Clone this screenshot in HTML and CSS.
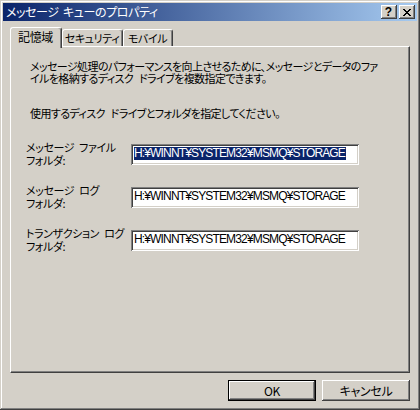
FILE: index.html
```html
<!DOCTYPE html>
<html lang="ja">
<head>
<meta charset="utf-8">
<link rel="stylesheet" href="styles.css">
</head>
<body>
<div class="window">
  <div class="titlebar">
    <span class="title">メッセージ キューのプロパティ</span>
    <div class="caption-buttons">
      <div class="cbtn help">?</div>
      <div class="cbtn close">
        <svg width="8" height="7" viewBox="0 0 8 7"><path d="M0 0h2v1h1v1h2V1h1V0h2v1H7v1H6v1H5v1h1v1h1v1h1v1H6V6H5V5H3v1H2v1H0V6h1V5h1V4h1V3H2V2H1V1H0z" fill="#000"/></svg>
      </div>
    </div>
  </div>
  <div class="body">
    <div class="tabs">
      <div class="tab active">記憶域</div>
      <div class="tab tab-sec">セキュリティ</div>
      <div class="tab tab-mob">モバイル</div>
    </div>
    <div class="panel">
      <p class="desc">メッセージ処理のパフォーマンスを向上させるために、メッセージとデータのファ<br>イルを格納するディスク ドライブを複数指定できます。</p>
      <p class="desc desc2">使用するディスク ドライブとフォルダを指定してください。</p>
      <div class="rows">
        <div class="row">
          <div class="label">メッセージ ファイル<br>フォルダ:</div>
          <div class="field"><span class="sel">H:¥WINNT¥SYSTEM32¥MSMQ¥STORAGE</span></div>
        </div>
        <div class="row">
          <div class="label">メッセージ ログ<br>フォルダ:</div>
          <div class="field"><span>H:¥WINNT¥SYSTEM32¥MSMQ¥STORAGE</span></div>
        </div>
        <div class="row">
          <div class="label">トランザクション ログ<br>フォルダ:</div>
          <div class="field"><span>H:¥WINNT¥SYSTEM32¥MSMQ¥STORAGE</span></div>
        </div>
      </div>
    </div>
    <div class="buttons">
      <div class="btn default">OK</div>
      <div class="btn">キャンセル</div>
    </div>
  </div>
</div>
</body>
</html>
```
FILE: styles.css
```css
html, body {
  margin: 0;
  padding: 0;
  background: #D4D0C8;
}
body {
  font-family: "Noto Sans CJK JP", "Liberation Sans", sans-serif;
  font-size: 11px;
  color: #000;
  font-feature-settings: "palt";
}
.window {
  width: 420px;
  height: 410px;
  box-sizing: border-box;
  padding: 3px;
  background: #D4D0C8;
  box-shadow: inset -1px -1px #404040, inset 1px 1px #D4D0C8, inset -2px -2px #808080, inset 2px 2px #ffffff;
}
.titlebar {
  height: 18px;
  display: flex;
  align-items: center;
  justify-content: space-between;
  background: linear-gradient(to right, #0A246A, #A6CAF0);
  padding: 0 2px 0 3px;
}
.title {
  color: #fff;
  font-size: 12px;
  line-height: 18px;
  letter-spacing: -0.4px;
  word-spacing: 2px;
}
.caption-buttons {
  display: flex;
  gap: 2px;
}
.cbtn {
  width: 16px;
  height: 14px;
  box-sizing: border-box;
  background: #D4D0C8;
  box-shadow: inset -1px -1px #404040, inset 1px 1px #ffffff, inset -2px -2px #808080;
  display: flex;
  align-items: center;
  justify-content: center;
}
.help {
  font-family: "Liberation Sans", sans-serif;
  font-weight: bold;
  font-size: 12px;
  line-height: 14px;
  padding-right: 1px;
}
.close svg { display: block; margin-left: -1px; }
.body {
  padding: 6px 0 0 7px;
}
.tabs {
  display: flex;
  height: 19px;
  align-items: flex-start;
}
.tab {
  height: 17px;
  margin-top: 2px;
  box-sizing: border-box;
  border-top: 1px solid #fff;
  border-left: 1px solid #fff;
  border-right: 1px solid #404040;
  border-radius: 3px 3px 0 0;
  box-shadow: inset -1px 0 #808080;
  background: #D4D0C8;
  display: flex;
  align-items: center;
  justify-content: center;
  padding-right: 1px;
  line-height: 14px;
  font-size: 11px;
  letter-spacing: -0.4px;
  white-space: nowrap;
}
.tab.active {
  width: 52px;
  height: 21px;
  margin-top: 0;
  position: relative;
  z-index: 1;
  padding-bottom: 2px;
  font-size: 12px;
}
.tab-sec { width: 61px; }
.tab-mob { width: 50px; }
.panel {
  width: 400px;
  height: 327px;
  box-sizing: border-box;
  border-top: 1px solid #fff;
  border-left: 1px solid #fff;
  border-right: 1px solid #404040;
  border-bottom: 1px solid #404040;
  box-shadow: inset -1px -1px #808080;
  padding: 13px 0 0 15px;
}
.desc {
  margin: 0 0 0 4px;
  line-height: 12px;
  white-space: nowrap;
  letter-spacing: -0.6px;
  word-spacing: 4px;
}
.desc2 {
  margin-top: 23px;
}
.rows {
  margin-top: 22px;
  display: flex;
  flex-direction: column;
  gap: 17px;
}
.row {
  display: flex;
  align-items: flex-start;
}
.label {
  width: 105px;
  line-height: 13px;
  letter-spacing: -0.4px;
  word-spacing: 3px;
  white-space: nowrap;
}
.field {
  margin-top: 3px;
  width: 228px;
  height: 21px;
  box-sizing: border-box;
  background: #fff;
  box-shadow: inset 1px 1px #808080, inset -1px -1px #ffffff, inset 2px 2px #404040, inset -2px -2px #D4D0C8;
  padding: 3px 0 0 3px;
  font-family: "Liberation Sans", sans-serif;
  font-size: 12px;
  line-height: 13px;
  letter-spacing: -0.85px;
  white-space: nowrap;
}
.sel {
  background: #0A246A;
  color: #fff;
  display: inline-block;
  padding-right: 1px;
}
.buttons {
  display: flex;
  justify-content: flex-end;
  gap: 6px;
  width: 400px;
  margin-top: 7px;
}
.btn {
  width: 88px;
  height: 21px;
  box-sizing: border-box;
  background: #D4D0C8;
  box-shadow: inset -1px -1px #404040, inset 1px 1px #ffffff, inset -2px -2px #808080;
  display: flex;
  align-items: center;
  justify-content: center;
  line-height: 14px;
  font-size: 12px;
  letter-spacing: -0.3px;
}
.btn.default {
  box-shadow: inset 0 0 0 1px #000, inset -2px -2px #404040, inset 2px 2px #ffffff, inset -3px -3px #808080;
}
```
